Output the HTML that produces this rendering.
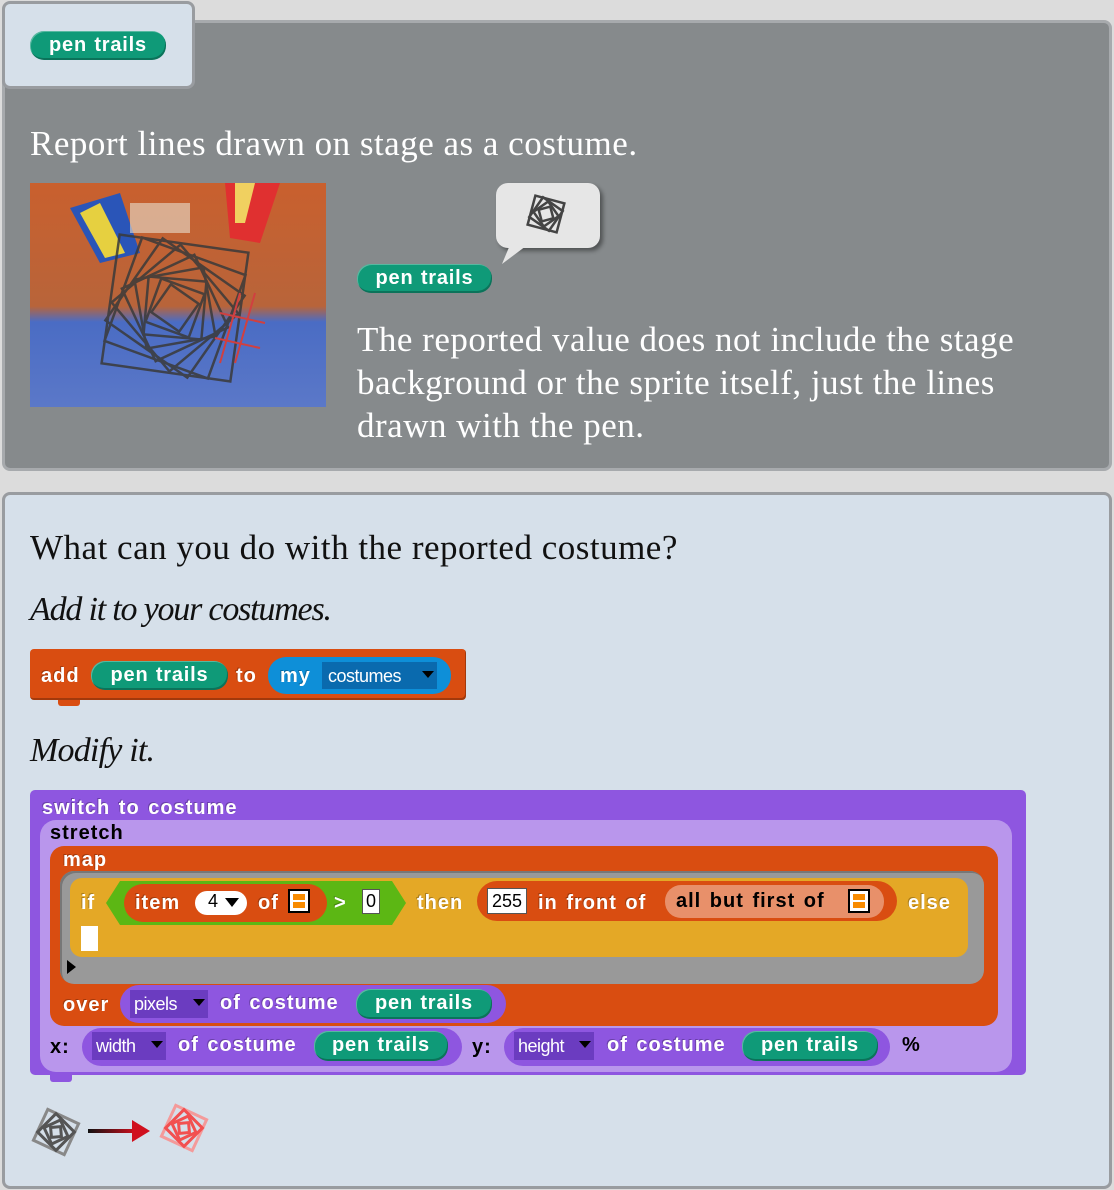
<!DOCTYPE html>
<html><head><meta charset="utf-8"><style>
*{margin:0;padding:0;box-sizing:border-box}
body{width:1114px;height:1190px;background:#dcdcdc;position:relative;overflow:hidden;font-family:"Liberation Sans",sans-serif}
.a{position:absolute}
.serif{font-family:"Liberation Serif",serif;white-space:nowrap;font-size:35px;letter-spacing:0.5px}
.b{position:absolute;font-weight:bold;font-size:20px;color:#fff;white-space:nowrap;letter-spacing:1px;word-spacing:2px;text-shadow:-1px -1px 0 rgba(0,0,0,.25)}
.pill{position:absolute;background:#0f9a78;border-radius:14px;color:#fff;font-weight:bold;font-size:20px;letter-spacing:0.8px;word-spacing:1px;white-space:nowrap;text-align:center;box-shadow:inset -1px -2px 0 rgba(0,0,0,.25),inset 1px 1px 0 rgba(255,255,255,.3)}
.dd{position:absolute;font-size:18px;color:#fff;white-space:nowrap;letter-spacing:-0.5px}
.dd:after{content:"";position:absolute;right:3px;top:9px;border:6px solid transparent;border-top:7px solid #000;border-bottom:0}
.wb{position:absolute;background:#fff;color:#000;font-size:18px;text-align:center;border:1px solid #555}
.lst{position:absolute;width:22px;height:24px;background:#fff;border:2px solid #000}
.lst:before{content:"";position:absolute;left:3px;top:3px;width:12px;height:6px;background:#f88b00}
.lst:after{content:"";position:absolute;left:3px;top:11px;width:12px;height:6px;background:#f88b00}
</style></head><body>

<div class="a" style="left:2px;top:20px;width:1110px;height:451px;background:#868a8c;border:3px solid #a7aaad;border-radius:8px"></div>
<div class="a" style="left:2px;top:1px;width:193px;height:88px;background:#d6e0ea;border:3px solid #999ca0;border-radius:8px"></div>
<div class="pill" style="left:30px;top:31px;width:136px;height:29px;line-height:28px">pen trails</div>

<div class="a serif" style="left:30px;top:124px;color:#fff">Report lines drawn on stage as a costume.</div>

<svg class="a" style="left:30px;top:183px" width="296" height="224" viewBox="0 0 296 224">
<defs><linearGradient id="g" x1="0" y1="0" x2="0" y2="1"><stop offset="0" stop-color="#c9602e"/><stop offset=".55" stop-color="#b8643a"/><stop offset=".62" stop-color="#4a6cc4"/><stop offset="1" stop-color="#5b78c8"/></linearGradient></defs>
<rect width="296" height="224" fill="url(#g)"/>
<polygon points="40,25 90,10 110,70 70,80" fill="#2a55b8"/>
<polygon points="50,30 70,20 95,70 75,75" fill="#e6d040"/>
<polygon points="195,0 250,0 230,60 200,55" fill="#e03030"/>
<polygon points="205,0 225,0 215,40 205,40" fill="#f0d060"/>
<rect x="100" y="20" width="60" height="30" fill="#e8e0d0" opacity=".6"/>
<g fill="none" stroke="#3a3a3a" stroke-width="2.5" opacity=".85">
<rect x="90" y="70" width="110" height="110" transform="rotate(20 145 125)"/>
<rect x="95" y="75" width="100" height="100" transform="rotate(35 145 125)"/>
<rect x="100" y="80" width="90" height="90" transform="rotate(50 145 125)"/>
<rect x="105" y="85" width="80" height="80" transform="rotate(65 145 125)"/>
<rect x="110" y="90" width="70" height="70" transform="rotate(80 145 125)"/>
<rect x="116" y="96" width="58" height="58" transform="rotate(95 145 125)"/>
<rect x="122" y="102" width="46" height="46" transform="rotate(110 145 125)"/>
<rect x="128" y="108" width="34" height="34" transform="rotate(125 145 125)"/>
<rect x="80" y="60" width="130" height="130" transform="rotate(8 145 125)"/>
</g>
<g stroke="#d04040" stroke-width="2"><line x1="210" y1="110" x2="190" y2="180"/><line x1="225" y1="110" x2="205" y2="180"/><line x1="190" y1="130" x2="235" y2="140"/><line x1="185" y1="155" x2="230" y2="165"/></g>
</svg>

<div class="a" style="left:496px;top:183px;width:104px;height:65px;background:#e6e6e6;border-radius:12px;box-shadow:3px 3px 4px rgba(0,0,0,.4)"></div>
<svg class="a" style="left:500px;top:240px" width="40" height="25"><polygon points="12,0 34,0 2,24" fill="#e6e6e6"/></svg>
<svg class="a" style="left:518px;top:188px" width="56" height="52" viewBox="0 0 56 52"><g transform="translate(28 26)" fill="none" stroke="#444" stroke-width="2.5"><rect x="-15" y="-15" width="30" height="30" transform="rotate(15)"/><rect x="-12" y="-12" width="24" height="24" transform="rotate(35)"/><rect x="-9" y="-9" width="18" height="18" transform="rotate(55)"/><rect x="-6" y="-6" width="12" height="12" transform="rotate(75)"/></g></svg>

<div class="pill" style="left:357px;top:264px;width:135px;height:29px;line-height:28px">pen trails</div>

<div class="a serif" style="left:357px;top:318px;line-height:43px;color:#fff">The reported value does not include the stage<br>background or the sprite itself, just the lines<br>drawn with the pen.</div>

<div class="a" style="left:2px;top:492px;width:1110px;height:697px;background:#d6e0ea;border:3px solid #999ca0;border-radius:8px"></div>

<div class="a serif" style="left:30px;top:528px;color:#111">What can you do with the reported costume?</div>
<div class="a serif" style="left:30px;top:591px;color:#111;font-style:italic;letter-spacing:-1.2px;font-size:34px">Add it to your costumes.</div>

<div class="a" style="left:30px;top:649px;width:436px;height:51px;background:#d94d11;border-radius:4px;box-shadow:inset -1px -2px 0 rgba(0,0,0,.25)"></div>
<div class="a" style="left:58px;top:700px;width:22px;height:6px;background:#d94d11;border-radius:0 0 3px 3px"></div>
<div class="b" style="left:41px;top:665px">add</div>
<div class="pill" style="left:91px;top:661px;width:137px;height:29px;line-height:28px">pen trails</div>
<div class="b" style="left:236px;top:665px">to</div>
<div class="a" style="left:268px;top:657px;width:183px;height:37px;background:#0e8fd8;border-radius:18px"></div>
<div class="b" style="left:280px;top:665px">my</div>
<div class="dd" style="left:322px;top:662px;width:115px;height:27px;background:#0a6aae;padding:4px 0 0 6px">costumes</div>

<div class="a serif" style="left:30px;top:732px;color:#111;font-style:italic;letter-spacing:-0.8px;font-size:34px">Modify it.</div>

<div class="a" style="left:30px;top:790px;width:996px;height:285px;background:#8e56e0;border-radius:5px"></div>
<div class="a" style="left:50px;top:1075px;width:22px;height:7px;background:#8e56e0;border-radius:0 0 3px 3px"></div>
<div class="b" style="left:42px;top:797px">switch to costume</div>
<div class="a" style="left:40px;top:820px;width:972px;height:252px;background:#b996ec;border-radius:16px"></div>
<div class="b" style="left:50px;top:822px;color:#000;text-shadow:none">stretch</div>
<div class="a" style="left:50px;top:846px;width:948px;height:180px;background:#d94d11;border-radius:14px"></div>
<div class="b" style="left:63px;top:849px">map</div>
<div class="a" style="left:60px;top:871px;width:924px;height:113px;background:#999;border-radius:14px;box-shadow:inset 2px 2px 0 #777"></div>
<svg class="a" style="left:66px;top:959px" width="12" height="16"><polygon points="1,1 10,8 1,15" fill="#000"/></svg>
<div class="a" style="left:70px;top:878px;width:898px;height:79px;background:#e4a826;border-radius:12px"></div>
<div class="b" style="left:81px;top:892px">if</div>
<div class="a" style="left:81px;top:926px;width:17px;height:25px;background:#fff"></div>
<svg class="a" style="left:105px;top:880px" width="302" height="46"><polygon points="15,1 287,1 301,23 287,45 15,45 1,23" fill="#5cb714"/></svg>
<div class="a" style="left:124px;top:884px;width:203px;height:38px;background:#d94d11;border-radius:19px"></div>
<div class="b" style="left:135px;top:892px">item</div>
<div class="a" style="left:195px;top:891px;width:52px;height:24px;background:#fff;border-radius:12px"></div>
<div class="a" style="left:208px;top:891px;font-size:18px">4</div>
<svg class="a" style="left:224px;top:897px" width="16" height="12"><polygon points="1,1 15,1 8,10" fill="#000"/></svg>
<div class="b" style="left:258px;top:892px">of</div>
<div class="lst" style="left:288px;top:889px"></div>
<div class="b" style="left:334px;top:892px">&gt;</div>
<div class="wb" style="left:362px;top:889px;width:18px;height:25px;line-height:23px">0</div>
<div class="b" style="left:417px;top:892px">then</div>
<div class="a" style="left:477px;top:881px;width:420px;height:40px;background:#d94d11;border-radius:20px"></div>
<div class="wb" style="left:487px;top:888px;width:40px;height:26px;line-height:24px">255</div>
<div class="b" style="left:538px;top:892px">in front of</div>
<div class="a" style="left:665px;top:885px;width:219px;height:33px;background:#e8906a;border-radius:16px"></div>
<div class="b" style="left:676px;top:890px;color:#000;text-shadow:none">all but first of</div>
<div class="lst" style="left:848px;top:889px"></div>
<div class="b" style="left:908px;top:892px">else</div>
<div class="b" style="left:63px;top:994px">over</div>
<div class="a" style="left:120px;top:985px;width:386px;height:38px;background:#8e56e0;border-radius:19px"></div>
<div class="dd" style="left:130px;top:990px;width:78px;height:28px;background:#6b3cc0;padding:4px 0 0 4px">pixels</div>
<div class="b" style="left:220px;top:992px">of costume</div>
<div class="pill" style="left:356px;top:989px;width:136px;height:30px;line-height:29px">pen trails</div>
<div class="b" style="left:50px;top:1036px;color:#000;text-shadow:none">x:</div>
<div class="a" style="left:82px;top:1028px;width:380px;height:38px;background:#8e56e0;border-radius:19px"></div>
<div class="dd" style="left:92px;top:1032px;width:74px;height:28px;background:#6b3cc0;padding:4px 0 0 4px">width</div>
<div class="b" style="left:178px;top:1034px">of costume</div>
<div class="pill" style="left:314px;top:1031px;width:134px;height:30px;line-height:29px">pen trails</div>
<div class="b" style="left:472px;top:1036px;color:#000;text-shadow:none">y:</div>
<div class="a" style="left:504px;top:1028px;width:386px;height:38px;background:#8e56e0;border-radius:19px"></div>
<div class="dd" style="left:514px;top:1032px;width:80px;height:28px;background:#6b3cc0;padding:4px 0 0 4px">height</div>
<div class="b" style="left:607px;top:1034px">of costume</div>
<div class="pill" style="left:742px;top:1031px;width:136px;height:30px;line-height:29px">pen trails</div>
<div class="b" style="left:902px;top:1034px;color:#000;text-shadow:none">%</div>

<svg class="a" style="left:28px;top:1104px" width="56" height="56" viewBox="0 0 56 56"><g transform="translate(28 28)" fill="none" stroke="#555" stroke-width="3"><rect x="-17" y="-17" width="34" height="34" transform="rotate(25)" stroke="#888"/><rect x="-13" y="-13" width="26" height="26" transform="rotate(45)"/><rect x="-9" y="-9" width="18" height="18" transform="rotate(65)"/><rect x="-5" y="-5" width="10" height="10" transform="rotate(85)"/></g></svg>
<svg class="a" style="left:86px;top:1118px" width="66" height="26"><defs><linearGradient id="ar"><stop offset="0" stop-color="#111"/><stop offset="1" stop-color="#d0101e"/></linearGradient></defs><rect x="2" y="11" width="48" height="4" fill="url(#ar)"/><polygon points="46,2 64,13 46,24" fill="#d0101e"/></svg>
<svg class="a" style="left:156px;top:1100px" width="56" height="56" viewBox="0 0 56 56"><g transform="translate(28 28)" fill="none" stroke="#f25050" stroke-width="3"><rect x="-17" y="-17" width="34" height="34" transform="rotate(25)" stroke="#f49a9a"/><rect x="-13" y="-13" width="26" height="26" transform="rotate(45)"/><rect x="-9" y="-9" width="18" height="18" transform="rotate(65)"/><rect x="-5" y="-5" width="10" height="10" transform="rotate(85)"/></g></svg>

</body></html>
